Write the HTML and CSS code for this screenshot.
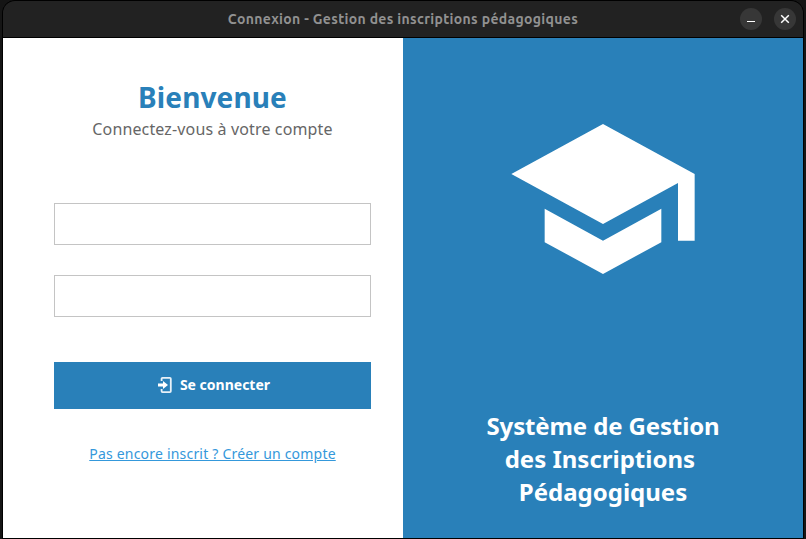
FILE: index.html
```html
<!DOCTYPE html>
<html lang="fr">
<head>
<meta charset="utf-8">
<title>Connexion - Gestion des inscriptions pédagogiques</title>
<link rel="stylesheet" href="styles.css">
</head>
<body>
<div class="window">
  <header class="titlebar">
    <span class="window-title">Connexion - Gestion des inscriptions pédagogiques</span>
    <div class="controls">
      <button class="control" aria-label="Réduire"><svg width="22" height="22" viewBox="0 0 22 22"><path d="M7 13.5h8" stroke="#fff" fill="none"/></svg></button>
      <button class="control" aria-label="Fermer"><svg width="22" height="22" viewBox="0 0 22 22"><path d="M7.2 7.2l7.6 7.6M14.8 7.2l-7.6 7.6" stroke="#fff" stroke-width="1.5" fill="none"/></svg></button>
    </div>
  </header>
  <main class="content">
    <form class="login">
      <h1 class="heading">Bienvenue</h1>
      <p class="subtitle">Connectez-vous à votre compte</p>
      <input class="field field-user" type="text" aria-label="Identifiant">
      <input class="field field-password" type="password" aria-label="Mot de passe">
      <button class="submit" type="button">
        <svg class="login-icon" width="15" height="18" viewBox="0 0 15 18"><path d="M3.6 5V2.7Q3.6 1.8 4.5 1.8H11.9Q12.8 1.8 12.8 2.7V15.3Q12.8 16.2 11.9 16.2H4.5Q3.6 16.2 3.6 15.3V13" fill="none" stroke="#e8f1f8" stroke-width="1.8"/><path d="M0 7.5h5V5l5 4-5 4v-2.5H0z" fill="#fff"/></svg>
        <span class="submit-label">Se connecter</span>
      </button>
      <a class="register" href="#">Pas encore inscrit ? Créer un compte</a>
    </form>
    <section class="brand">
      <svg class="cap" width="200" height="200" viewBox="0 0 24 24"><path fill="#fff" d="M5 13.18v4L12 21l7-3.82v-4L12 17l-7-3.82zM12 3L1 9l11 6 9-4.91V17h2V9L12 3z"/></svg>
      <p class="brand-name"><span class="brand-line">Système de Gestion</span><br>des Inscriptions&nbsp;<br>Pédagogiques</p>
    </section>
  </main>
</div>
</body>
</html>
```
FILE: styles.css
```css
* { box-sizing: border-box; }
body {
  margin: 0;
  background: #151515;
  font-family: "Noto Sans", sans-serif;
  overflow: hidden;
}
.window {
  width: 802px;
  height: 539px;
  margin-left: 2px;
  border: 1px solid #000;
  border-radius: 13px 13px 0 0;
  overflow: hidden;
  background: #000;
}
.titlebar {
  height: 37px;
  display: grid;
  grid-template-columns: 1fr auto 1fr;
  align-items: center;
  background: #222;
  border-bottom: 1px solid #000;
}
.window-title {
  grid-column: 2;
  color: #919191;
  font-family: Ubuntu, "Noto Sans", sans-serif;
  font-size: 14px;
  font-weight: 600;
  letter-spacing: 0.33px;
  line-height: 20px;
  white-space: nowrap;
}
.controls {
  justify-self: end;
  display: flex;
  gap: 12px;
  padding-right: 7px;
}
.control {
  width: 22px;
  height: 22px;
  padding: 0;
  border: 0;
  border-radius: 50%;
  background: #373737;
}
.control svg { display: block; }
.content {
  display: grid;
  grid-template-columns: 400px 400px;
  height: 500px;
}
.login {
  display: flex;
  flex-direction: column;
  align-items: center;
  background: #fff;
  padding: 40px 32px 0 51px;
}
.heading {
  margin: 0;
  color: #2980b9;
  font-size: 28px;
  line-height: 38px;
  font-weight: 700;
  letter-spacing: 0.12px;
}
.subtitle {
  margin: 2px 0 0;
  color: #666;
  font-size: 16px;
  line-height: 22px;
  letter-spacing: 0.14px;
}
.field {
  width: 317px;
  height: 42px;
  border: 1px solid #c4c4c4;
  background: #fff;
}
.field-user { margin-top: 63px; }
.field-password { margin-top: 30px; }
.submit {
  display: flex;
  align-items: center;
  justify-content: center;
  gap: 7px;
  width: 317px;
  height: 47px;
  margin-top: 45px;
  padding: 0 0 2px 3px;
  border: 0;
  background: #2980b9;
  color: #fff;
  font: 700 14px/20px "Noto Sans", sans-serif;
}
.register {
  margin-top: 35px;
  color: #3498db;
  font-size: 14px;
  line-height: 20px;
  letter-spacing: 0.2px;
}
.brand {
  display: flex;
  flex-direction: column;
  align-items: center;
  background: #2980b9;
  padding-top: 61px;
}
.brand-name {
  margin: 110px 0 0;
  color: #fff;
  font-size: 24px;
  line-height: 33px;
  font-weight: 700;
  text-align: center;
}
.brand-line { letter-spacing: -0.13px; }
```
